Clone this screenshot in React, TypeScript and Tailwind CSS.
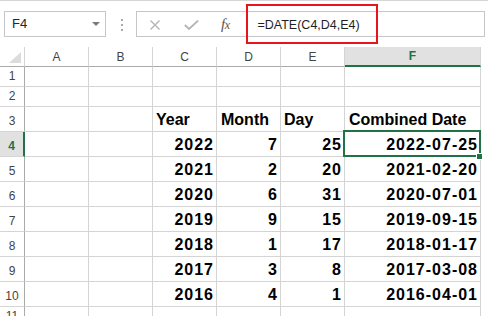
import React from "react"

const colNames = ["A", "B", "C", "D", "E", "F"]
const colWidths = ["w-[64px]", "w-[64px]", "w-[64px]", "w-[64px]", "w-[64px]", "w-[136px]"]

type Val = { text: string; right?: boolean; num?: boolean }

const data: (string | number)[][] = [
  [2022, 7, 25, "2022-07-25"],
  [2021, 2, 20, "2021-02-20"],
  [2020, 6, 31, "2020-07-01"],
  [2019, 9, 15, "2019-09-15"],
  [2018, 1, 17, "2018-01-17"],
  [2017, 3, 8, "2017-03-08"],
  [2016, 4, 1, "2016-04-01"],
]

const rows: { n: number; h: string; cells: (Val | null)[] }[] = [
  { n: 1, h: "h-[20px]", cells: [] },
  { n: 2, h: "h-[20px]", cells: [] },
  {
    n: 3,
    h: "h-[25px]",
    cells: [null, null, { text: "Year" }, { text: "Month" }, { text: "Day" }, { text: "Combined Date" }],
  },
  ...data.map((r, i) => ({
    n: i + 4,
    h: "h-[25px]",
    cells: [null, null, ...r.map((v) => ({ text: String(v), right: true, num: true }))],
  })),
  { n: 11, h: "h-[20px]", cells: [] },
]

const Cell: React.FC<{ w: string; val: Val | null; selected?: boolean; col: number }> = ({ w, val, selected, col }) => {
  const pl = col === 3 || col === 5 ? "pl-[4px]" : "pl-[3px]"
  return (
    <div
      className={`${w} shrink-0 relative border-r border-b border-[#d4d4d4] flex items-end pb-[3px] leading-none text-[16px] font-bold text-black ${
        val?.right ? "justify-end pr-[2px]" : pl
      }`}
    >
      {val && <span className={val.num ? "tracking-[1px]" : ""}>{val.text}</span>}
      {selected && (
        <>
          <div className="absolute left-[-2px] top-[-2px] right-[-1px] bottom-[-1px] border-2 border-[#217346] z-10" />
          <div className="absolute right-[-3px] bottom-[-4px] w-[7px] h-[7px] bg-[#217346] border border-white z-20" />
        </>
      )}
    </div>
  )
}

const App: React.FC = () => {
  return (
    <div className="w-[488px] h-[316px] overflow-hidden relative bg-white font-['Liberation_Sans',Arial,sans-serif]">
      {/* formula bar */}
      <div className="h-[47px] border-t border-[#d6d6d6]">
        <div className="flex items-start pt-[10px]">
          <div className="ml-[4px] w-[102px] h-[26px] border border-[#c6c6c6] flex items-center justify-between pl-[7px] pr-[5px] text-[13px] text-[#262626]">
            <span>F4</span>
            <svg width="8" height="4" viewBox="0 0 8 4">
              <polygon points="0,0 8,0 4,4" fill="#7a7a7a" />
            </svg>
          </div>
          <div className="ml-[15px] mt-[8px] flex flex-col gap-[3px]">
            <div className="w-[2px] h-[2px] bg-[#a8a8a8]" />
            <div className="w-[2px] h-[2px] bg-[#a8a8a8]" />
            <div className="w-[2px] h-[2px] bg-[#a8a8a8]" />
          </div>
          <div className="ml-[13px] w-[349px] h-[26px] border border-[#c6c6c6] flex items-center">
            <svg className="ml-[13px] mt-[1px]" width="10" height="10" viewBox="0 0 10 10">
              <path d="M0.5 0.5 L9.5 9.5 M9.5 0.5 L0.5 9.5" stroke="#b4b4b4" strokeWidth="1.4" fill="none" />
            </svg>
            <svg className="ml-[24px] mt-[1px]" width="15" height="10" viewBox="0 0 15 10">
              <path d="M0.8 5 L5 9 L14.2 0.6" stroke="#b4b4b4" strokeWidth="1.8" fill="none" />
            </svg>
            <span className="ml-[22px] text-[15px] italic text-[#555] font-['Liberation_Serif',serif] leading-none tracking-[-0.5px]">
              f<span className="text-[12px]">x</span>
            </span>
            <span className="ml-[28px] mt-[2px] text-[12.5px] text-[#1f1f1f]">=DATE(C4,D4,E4)</span>
          </div>
        </div>
      </div>

      {/* red highlight */}
      <div className="absolute left-[246px] top-[4px] w-[132px] h-[40px] border-2 border-[#e8141c]" />

      {/* header row */}
      <div className="flex h-[20px]">
        <div className="w-[25px] shrink-0 border-r border-b border-r-[#d4d4d4] border-b-[#ababab]">
          <svg width="24" height="19" viewBox="0 0 24 19">
            <polygon points="21,5 21,16 9,16" fill="#dcdcdc" />
          </svg>
        </div>
        {colNames.map((c, i) => (
          <div
            key={c}
            className={`${colWidths[i]} shrink-0 flex items-center justify-center text-[12px] border-r border-r-[#d4d4d4] ${
              c === "F"
                ? "bg-[#e1e1e1] border-b-2 border-b-[#217346] text-[#217346] font-bold"
                : "border-b border-b-[#ababab] text-[#444]"
            }`}
          >
            {c}
          </div>
        ))}
        <div className="flex-1" />
      </div>

      {/* rows */}
      {rows.map((r) => (
        <div key={r.n} className={`flex ${r.h}`}>
          <div
            className={`w-[25px] shrink-0 flex items-end justify-center pb-[4px] leading-none text-[12px] border-b border-b-[#d4d4d4] ${
              r.n === 4
                ? "bg-[#e1e1e1] border-r-2 border-r-[#217346] text-[#217346] font-bold"
                : "border-r border-r-[#ababab] text-[#444]"
            }`}
          >
            {r.n}
          </div>
          {colNames.map((c, i) => (
            <Cell key={c} col={i} w={colWidths[i]} val={r.cells[i] ?? null} selected={r.n === 4 && c === "F"} />
          ))}
          <div className="flex-1" />
        </div>
      ))}
    </div>
  )
}

export default App
